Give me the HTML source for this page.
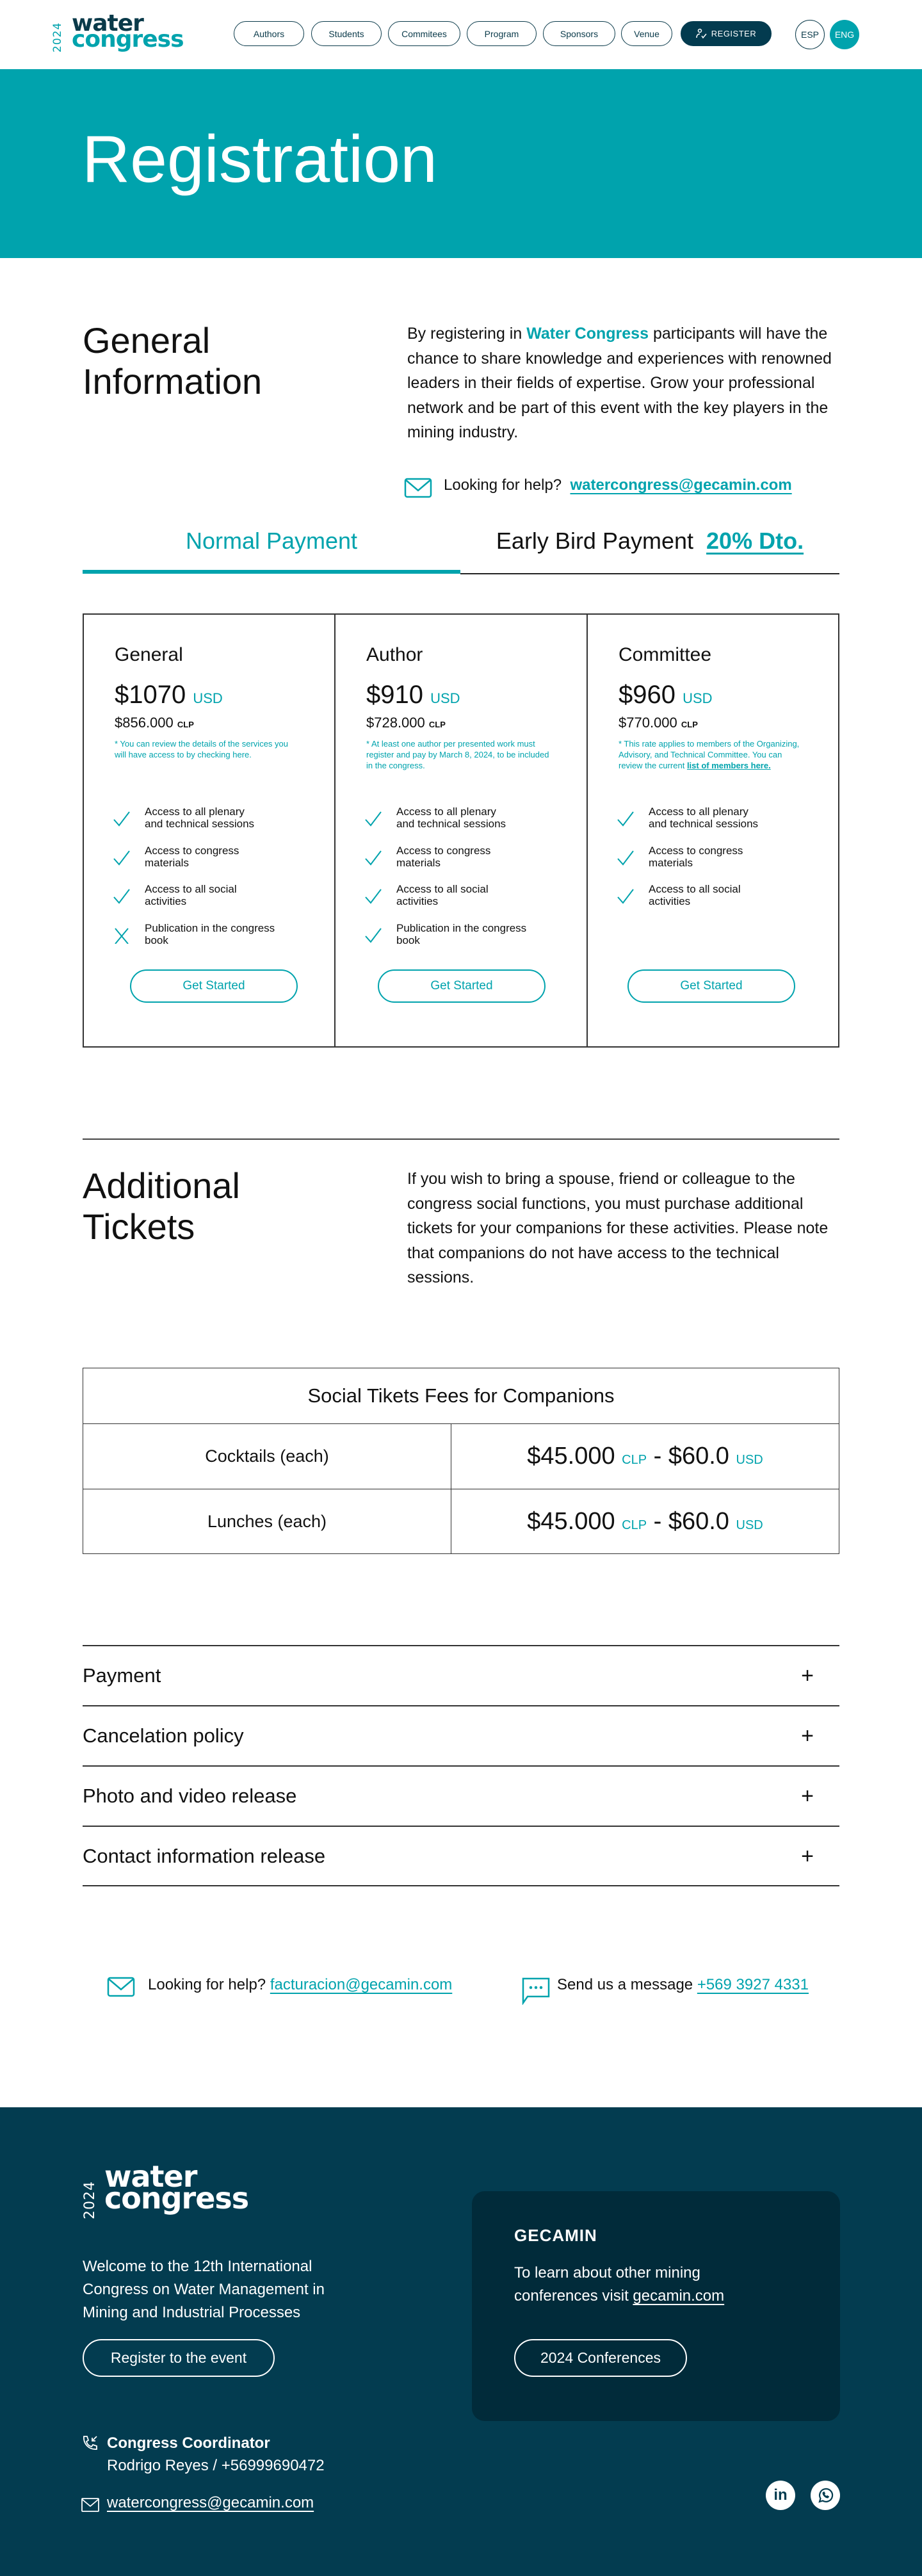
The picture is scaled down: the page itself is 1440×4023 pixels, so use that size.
<!DOCTYPE html>
<html><head><meta charset="utf-8">
<style>
*{margin:0;padding:0;box-sizing:border-box}
body{width:1440px;height:4023px;position:relative;background:#fff;font-family:"Liberation Sans",sans-serif;color:#111;overflow:hidden}
.a{position:absolute}
.teal{color:#00a3ad}
.pill{position:absolute;top:33px;height:39px;border:1.5px solid #0a3a4a;border-radius:20px;font-size:14px;display:flex;align-items:center;justify-content:center;color:#0a3a4a}
.circ{position:absolute;top:31px;width:46px;height:46px;border-radius:50%;font-size:14px;display:flex;align-items:center;justify-content:center}
.logo .y{position:absolute;transform:rotate(-90deg);transform-origin:left top;font-family:"DejaVu Sans",sans-serif;letter-spacing:1px}
.logo .w{position:absolute;font-family:"DejaVu Sans",sans-serif;font-weight:bold;letter-spacing:-1px}
.card{position:absolute;top:958px;height:678px;width:394px}
.card h3{position:absolute;left:50px;top:48px;font-size:30px;font-weight:normal}
.price{position:absolute;left:50px;top:105px;font-size:40px}
.price span{font-size:22px;color:#00a3ad}
.clp{position:absolute;left:50px;top:158px;font-size:22px}
.clp span{font-size:13px;font-weight:bold}
.note{position:absolute;left:50px;top:195px;width:290px;font-size:13px;line-height:17px;color:#00a3ad}
.feat{position:absolute;left:47px;width:320px;font-size:17px;line-height:19px;padding-left:50px}
.feat svg{position:absolute;left:0;top:8px}
.btn{position:absolute;top:556px;width:262px;height:52px;border:2px solid #00a3ad;border-radius:26px;color:#00a3ad;font-size:19px;display:flex;align-items:center;justify-content:center}
.acc{position:absolute;left:129px;width:1182px;height:94px;border-top:2px solid #333;font-size:31px;display:flex;align-items:center;justify-content:space-between;padding-right:40px}
.acc b{font-weight:normal;font-size:34px}
td{border:1.5px solid #333;text-align:center;font-size:27px}
</style></head><body>

<!-- header -->
<div class="logo a" style="left:77px;top:20px;width:220px;height:70px">
  <div class="y" style="left:3px;top:62px;font-size:17px;color:#00a3ad">2024</div>
  <div class="w" style="left:35px;top:-4px;font-size:36px;color:#0a3a4a">water</div>
  <div class="w" style="left:35px;top:21px;font-size:36px;color:#00a3ad">congress</div>
</div>
<div class="pill" style="left:365px;width:110px">Authors</div>
<div class="pill" style="left:486px;width:110px">Students</div>
<div class="pill" style="left:606px;width:113px">Commitees</div>
<div class="pill" style="left:729px;width:109px">Program</div>
<div class="pill" style="left:848px;width:113px">Sponsors</div>
<div class="pill" style="left:970px;width:80px">Venue</div>
<div class="pill" style="left:1063px;width:142px;background:#033b4f;color:#fff;border-color:#033b4f;font-size:13px;letter-spacing:.5px">
 <svg width="18" height="18" viewBox="0 0 18 18" fill="none" stroke="#fff" stroke-width="1.5" style="margin-right:6px"><circle cx="6" cy="4" r="2.5"/><path d="M1 15c0-4 2-6 5-6M9 12l2 3 5-6"/></svg>REGISTER</div>
<div class="circ" style="left:1242px;border:1.5px solid #0a3a4a;color:#0a3a4a">ESP</div>
<div class="circ" style="left:1296px;background:#00a3ad;color:#fff">ENG</div>

<!-- hero -->
<div class="a" style="left:0;top:108px;width:1440px;height:295px;background:#00a3ad"></div>
<div class="a" style="left:128px;top:190px;font-size:104px;color:#fff;font-weight:300">Registration</div>

<!-- general info -->
<div class="a" style="left:129px;top:500px;font-size:56px;line-height:64px">General<br>Information</div>
<div class="a" style="left:636px;top:502px;width:680px;font-size:25px;line-height:38.5px">By registering in <span class="teal" style="font-weight:bold">Water Congress</span> participants will have the chance to share knowledge and experiences with renowned leaders in their fields of expertise. Grow your professional network and be part of this event with the key players in the mining industry.</div>
<svg class="a" style="left:631px;top:746px" width="44" height="32" viewBox="0 0 44 32" fill="none" stroke="#00a3ad" stroke-width="2.5"><rect x="2" y="2" width="40" height="28" rx="3"/><path d="M2 3l20 17L42 3"/></svg>
<div class="a" style="left:693px;top:744px;font-size:24px">Looking for help? &nbsp;<span class="teal" style="font-weight:bold;text-decoration:underline;text-underline-offset:5px">watercongress@gecamin.com</span></div>

<!-- tabs -->
<div class="a teal" style="left:129px;top:824px;width:590px;text-align:center;font-size:36px">Normal Payment</div>
<div class="a" style="left:719px;top:824px;width:592px;text-align:center;font-size:36px">Early Bird Payment &nbsp;<span class="teal" style="font-weight:bold;text-decoration:underline;text-underline-offset:6px">20% Dto.</span></div>
<div class="a" style="left:129px;top:890px;width:590px;height:6px;background:#00a3ad"></div>
<div class="a" style="left:719px;top:895px;width:592px;height:2px;background:#222"></div>

<!-- cards -->
<div class="a" style="left:129px;top:958px;width:1182px;height:678px;border:2px solid #333"></div>
<div class="a" style="left:522px;top:958px;width:1.5px;height:678px;background:#333"></div>
<div class="a" style="left:916px;top:958px;width:1.5px;height:678px;background:#333"></div>

<div class="card" style="left:129px">
 <h3>General</h3>
 <div class="price">$1070 <span>USD</span></div>
 <div class="clp">$856.000 <span>CLP</span></div>
 <div class="note">* You can review the details of the services you will have access to by checking here.</div>
 <div class="feat" style="top:300px"><svg width="28" height="26"><path d="M2 14l8 9L26 2" fill="none" stroke="#00a3ad" stroke-width="2"/></svg>Access to all plenary<br>and technical sessions</div>
 <div class="feat" style="top:361px"><svg width="28" height="26"><path d="M2 14l8 9L26 2" fill="none" stroke="#00a3ad" stroke-width="2"/></svg>Access to congress<br>materials</div>
 <div class="feat" style="top:421px"><svg width="28" height="26"><path d="M2 14l8 9L26 2" fill="none" stroke="#00a3ad" stroke-width="2"/></svg>Access to all social<br>activities</div>
 <div class="feat" style="top:482px"><svg width="28" height="26"><path d="M4 2l20 24M24 2L4 26" fill="none" stroke="#00a3ad" stroke-width="2"/></svg>Publication in the congress<br>book</div>
 <div class="btn" style="left:74px">Get Started</div>
</div>
<div class="card" style="left:522px">
 <h3>Author</h3>
 <div class="price">$910 <span>USD</span></div>
 <div class="clp">$728.000 <span>CLP</span></div>
 <div class="note">* At least one author per presented work must register and pay by March 8, 2024, to be included in the congress.</div>
 <div class="feat" style="top:300px"><svg width="28" height="26"><path d="M2 14l8 9L26 2" fill="none" stroke="#00a3ad" stroke-width="2"/></svg>Access to all plenary<br>and technical sessions</div>
 <div class="feat" style="top:361px"><svg width="28" height="26"><path d="M2 14l8 9L26 2" fill="none" stroke="#00a3ad" stroke-width="2"/></svg>Access to congress<br>materials</div>
 <div class="feat" style="top:421px"><svg width="28" height="26"><path d="M2 14l8 9L26 2" fill="none" stroke="#00a3ad" stroke-width="2"/></svg>Access to all social<br>activities</div>
 <div class="feat" style="top:482px"><svg width="28" height="26"><path d="M2 14l8 9L26 2" fill="none" stroke="#00a3ad" stroke-width="2"/></svg>Publication in the congress<br>book</div>
 <div class="btn" style="left:68px">Get Started</div>
</div>
<div class="card" style="left:916px">
 <h3>Committee</h3>
 <div class="price">$960 <span>USD</span></div>
 <div class="clp">$770.000 <span>CLP</span></div>
 <div class="note">* This rate applies to members of the Organizing, Advisory, and Technical Committee. You can review the current <b style="text-decoration:underline">list of members here.</b></div>
 <div class="feat" style="top:300px"><svg width="28" height="26"><path d="M2 14l8 9L26 2" fill="none" stroke="#00a3ad" stroke-width="2"/></svg>Access to all plenary<br>and technical sessions</div>
 <div class="feat" style="top:361px"><svg width="28" height="26"><path d="M2 14l8 9L26 2" fill="none" stroke="#00a3ad" stroke-width="2"/></svg>Access to congress<br>materials</div>
 <div class="feat" style="top:421px"><svg width="28" height="26"><path d="M2 14l8 9L26 2" fill="none" stroke="#00a3ad" stroke-width="2"/></svg>Access to all social<br>activities</div>
 <div class="btn" style="left:64px">Get Started</div>
</div>

<!-- additional tickets -->
<div class="a" style="left:129px;top:1778px;width:1182px;height:2px;background:#444"></div>
<div class="a" style="left:129px;top:1820px;font-size:56px;line-height:64px">Additional<br>Tickets</div>
<div class="a" style="left:636px;top:1822px;width:680px;font-size:25px;line-height:38.5px">If you wish to bring a spouse, friend or colleague to the congress social functions, you must purchase additional tickets for your companions for these activities. Please note that companions do not have access to the technical sessions.</div>

<table class="a" style="left:129px;top:2136px;width:1182px;border-collapse:collapse">
<tr style="height:87px"><td colspan="2" style="font-size:31px;font-weight:300">Social Tikets Fees for Companions</td></tr>
<tr style="height:102px"><td style="width:575px">Cocktails (each)</td><td style="font-size:38px">$45.000 <span class="teal" style="font-size:20px">CLP</span> - $60.0 <span class="teal" style="font-size:20px">USD</span></td></tr>
<tr style="height:101px"><td>Lunches (each)</td><td style="font-size:38px">$45.000 <span class="teal" style="font-size:20px">CLP</span> - $60.0 <span class="teal" style="font-size:20px">USD</span></td></tr>
</table>

<!-- accordion -->
<div class="acc" style="top:2569px">Payment<b>+</b></div>
<div class="acc" style="top:2663px">Cancelation policy<b>+</b></div>
<div class="acc" style="top:2757px">Photo and video release<b>+</b></div>
<div class="acc" style="top:2851px">Contact information release<b>+</b></div>
<div class="a" style="left:129px;top:2944px;width:1182px;height:2px;background:#333"></div>

<!-- contact row -->
<svg class="a" style="left:167px;top:3087px" width="44" height="32" viewBox="0 0 44 32" fill="none" stroke="#00a3ad" stroke-width="2.5"><rect x="2" y="2" width="40" height="28" rx="3"/><path d="M2 3l20 17L42 3"/></svg>
<div class="a" style="left:231px;top:3086px;font-size:24px">Looking for help? <span class="teal" style="text-decoration:underline;text-underline-offset:5px">facturacion@gecamin.com</span></div>
<svg class="a" style="left:814px;top:3087px" width="46" height="44" viewBox="0 0 46 44" fill="none" stroke="#00a3ad" stroke-width="2.5"><path d="M3 3h40v28H10l-7 10z"/><circle cx="15" cy="17" r="1" fill="#00a3ad"/><circle cx="23" cy="17" r="1" fill="#00a3ad"/><circle cx="31" cy="17" r="1" fill="#00a3ad"/></svg>
<div class="a" style="left:870px;top:3086px;font-size:24px">Send us a message <span class="teal" style="text-decoration:underline;text-underline-offset:5px">+569 3927 4331</span></div>

<!-- footer -->
<div class="a" style="left:0;top:3291px;width:1440px;height:732px;background:#033c50"></div>
<div class="logo a" style="left:127px;top:3378px;width:300px;height:95px">
  <div class="y" style="left:1px;top:88px;font-size:22px;color:#fff">2024</div>
  <div class="w" style="left:36px;top:-6px;font-size:46px;color:#fff">water</div>
  <div class="w" style="left:36px;top:28px;font-size:46px;color:#fff">congress</div>
</div>
<div class="a" style="left:129px;top:3522px;width:410px;font-size:24px;line-height:36px;color:#fff">Welcome to the 12th International Congress on Water Management in Mining and Industrial Processes</div>
<div class="a" style="left:129px;top:3653px;width:300px;height:59px;border:2px solid #fff;border-radius:30px;color:#fff;font-size:23px;display:flex;align-items:center;justify-content:center">Register to the event</div>

<div class="a" style="left:737px;top:3422px;width:575px;height:359px;background:#012b3a;border-radius:20px"></div>
<div class="a" style="left:803px;top:3476px;font-size:26px;font-weight:bold;color:#fff;letter-spacing:1px">GECAMIN</div>
<div class="a" style="left:803px;top:3532px;width:370px;font-size:24px;line-height:36px;color:#fff">To learn about other mining conferences visit <span style="text-decoration:underline;text-underline-offset:5px">gecamin.com</span></div>
<div class="a" style="left:803px;top:3653px;width:270px;height:59px;border:2px solid #fff;border-radius:30px;color:#fff;font-size:23px;display:flex;align-items:center;justify-content:center">2024 Conferences</div>

<svg class="a" style="left:127px;top:3802px" width="28" height="28" viewBox="0 0 28 28" fill="none" stroke="#fff" stroke-width="1.8"><path d="M4 3l5 0 2 6-3 2c1 4 4 7 8 8l2-3 6 2v5c-12 1-21-8-20-20z"/><path d="M24 3l-7 7M17 5v5h5"/></svg>
<div class="a" style="left:167px;top:3802px;font-size:24px;font-weight:bold;color:#fff">Congress Coordinator</div>
<div class="a" style="left:167px;top:3837px;font-size:24px;color:#fff">Rodrigo Reyes / +56999690472</div>
<svg class="a" style="left:127px;top:3900px" width="28" height="24" viewBox="0 0 28 24" fill="none" stroke="#fff" stroke-width="1.8"><rect x="1" y="2" width="26" height="20" rx="1"/><path d="M1 3l13 11L27 3"/></svg>
<div class="a" style="left:167px;top:3895px;font-size:24px;color:#fff;text-decoration:underline;text-underline-offset:5px">watercongress@gecamin.com</div>

<div class="a" style="left:1196px;top:3874px;width:46px;height:46px;border-radius:50%;background:#fff;color:#033c50;font-weight:bold;font-size:24px;display:flex;align-items:center;justify-content:center">in</div>
<div class="a" style="left:1266px;top:3874px;width:46px;height:46px;border-radius:50%;background:#fff;display:flex;align-items:center;justify-content:center">
 <svg width="28" height="28" viewBox="0 0 28 28" fill="none" stroke="#033c50" stroke-width="2.2"><path d="M5 24l1.5-5A10 10 0 1 1 10 22.5z"/><path d="M10 10c0 4 4 8 8 8l1.5-2-2.5-1.5-1 1c-1.5-.5-3-2-3.5-3.5l1-1L12 8.5z" fill="#033c50" stroke-width="1"/></svg></div>

</body></html>
